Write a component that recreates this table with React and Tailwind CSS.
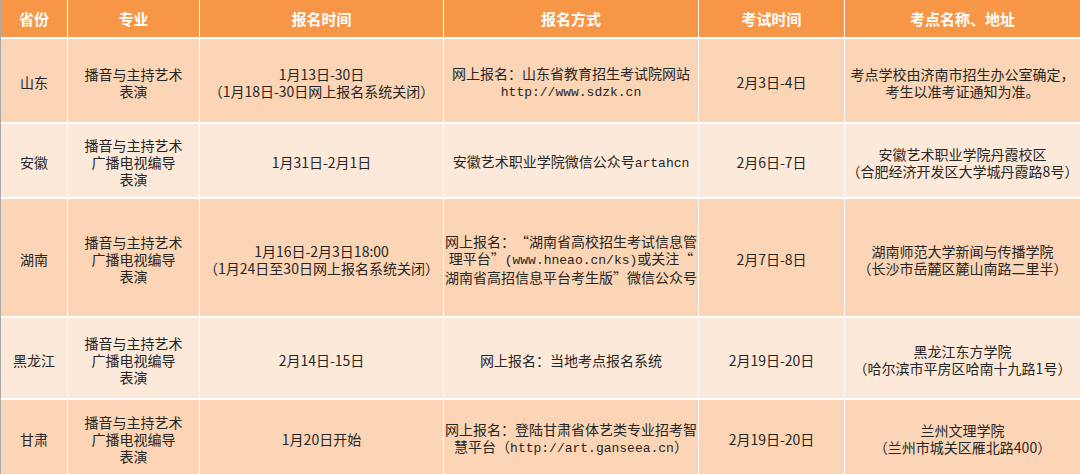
import React from "react";

const dark = "bg-[#fbd5b5]";
const light = "bg-[#fde9d9]";

const M = ({ children }) => (
  <span className="font-['Liberation_Mono',monospace] text-[13px]">{children}</span>
);

const rows = [
  {
    bg: dark,
    cells: [
      ["山东"],
      ["播音与主持艺术", "表演"],
      ["1月13日-30日", "（1月18日-30日网上报名系统关闭）"],
      ["网上报名：山东省教育招生考试院网站", <M key="u">http://www.sdzk.cn</M>],
      ["2月3日-4日"],
      ["考点学校由济南市招生办公室确定，", "考生以准考证通知为准。"],
    ],
  },
  {
    bg: light,
    cells: [
      ["安徽"],
      ["播音与主持艺术", "广播电视编导", "表演"],
      ["1月31日-2月1日"],
      [<span key="a">安徽艺术职业学院微信公众号<M>artahcn</M></span>],
      ["2月6日-7日"],
      ["安徽艺术职业学院丹霞校区", "（合肥经济开发区大学城丹霞路8号）"],
    ],
  },
  {
    bg: dark,
    cells: [
      ["湖南"],
      ["播音与主持艺术", "广播电视编导", "表演"],
      ["1月16日-2月3日18:00", "（1月24日至30日网上报名系统关闭）"],
      [
        "网上报名：“湖南省高校招生考试信息管",
        <span key="b">理平台”<M>(www.hneao.cn/ks)</M>或关注“</span>,
        "湖南省高招信息平台考生版”微信公众号",
      ],
      ["2月7日-8日"],
      ["湖南师范大学新闻与传播学院", "（长沙市岳麓区麓山南路二里半）"],
    ],
  },
  {
    bg: light,
    cells: [
      ["黑龙江"],
      ["播音与主持艺术", "广播电视编导", "表演"],
      ["2月14日-15日"],
      ["网上报名：当地考点报名系统"],
      ["2月19日-20日"],
      ["黑龙江东方学院", "（哈尔滨市平房区哈南十九路1号）"],
    ],
  },
  {
    bg: dark,
    cells: [
      ["甘肃"],
      ["播音与主持艺术", "广播电视编导", "表演"],
      ["1月20日开始"],
      [
        "网上报名：登陆甘肃省体艺类专业招考智",
        <span key="c">慧平台（<M>http://art.ganseea.cn</M>）</span>,
      ],
      ["2月19日-20日"],
      ["兰州文理学院", "（兰州市城关区雁北路400）"],
    ],
  },
];

const headers = ["省份", "专业", "报名时间", "报名方式", "考试时间", "考点名称、地址"];

export default function App() {
  return (
    <div className="w-[1080px] h-[474px] overflow-hidden bg-white font-['Noto_Sans_CJK_SC','Liberation_Sans',sans-serif] [text-spacing-trim:space-all]">
      <div className="grid grid-cols-[66px_131px_243px_254px_145px_1fr] grid-rows-[37px_83px_73px_117px_80px_74px] gap-x-px gap-y-[2px] bg-white border-l border-[#a9a9a9] h-[474px]">
        {headers.map((h) => (
          <div
            key={h}
            className="bg-[#f79646] flex items-center justify-center text-white font-bold text-[15px] pt-[2px]"
          >
            {h}
          </div>
        ))}
        {rows.map((r, ri) =>
          r.cells.map((lines, ci) => (
            <div
              key={ri + "-" + ci}
              className={`${r.bg} flex flex-col items-center justify-center text-center text-[#262626] text-[14px] leading-[17px] whitespace-nowrap pt-[4px]`}
            >
              {lines.map((l, li) => (
                <div key={li}>{l}</div>
              ))}
            </div>
          ))
        )}
      </div>
    </div>
  );
}
